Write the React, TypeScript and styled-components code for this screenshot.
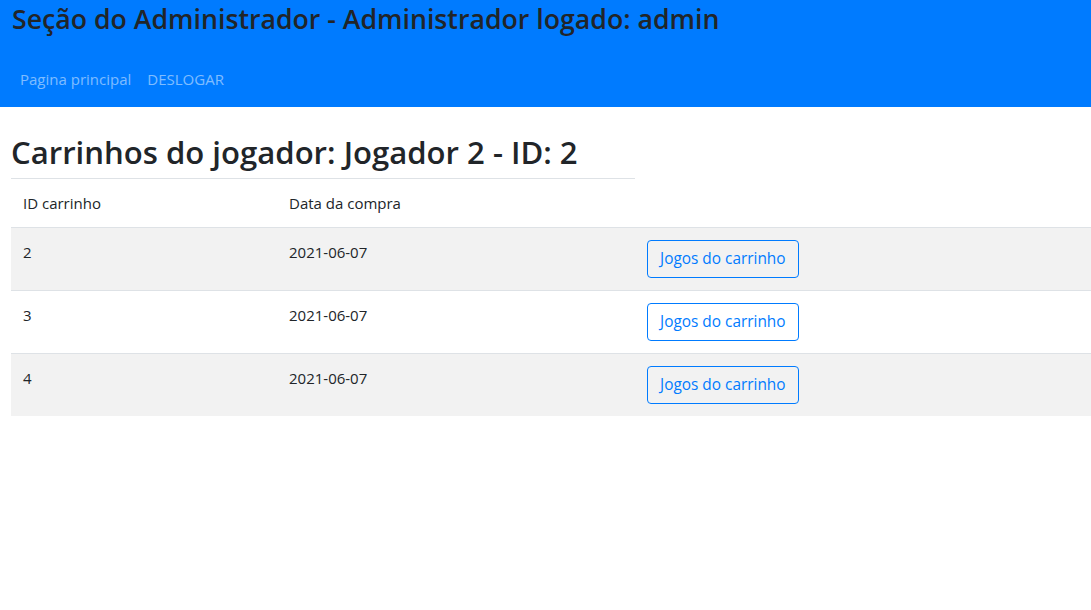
import React from "react";
import styled, { createGlobalStyle } from "styled-components";

const Global = createGlobalStyle`
  html, body { margin: 0; padding: 0; background: #fff; }
  body {
    font-family: "Open Sans", "Noto Sans", "Liberation Sans", sans-serif;
    color: #212529;
    font-size: 15px;
  }
  * { box-sizing: border-box; }
`;

const Header = styled.header`
  background: #007bff;
  height: 107px;
  padding: 2px 12px 0;
  display: flex;
  flex-direction: column;
`;

const SiteTitle = styled.h1`
  margin: 0;
  font-size: 26.7px;
  font-weight: 600;
  line-height: 34px;
  color: #212529;
`;

const Nav = styled.nav`
  display: flex;
  margin-top: 23px;
`;

const NavLink = styled.a`
  color: rgba(255, 255, 255, 0.5);
  padding: 8px;
  font-size: 15px;
  line-height: 24px;
  text-decoration: none;
  cursor: pointer;
`;

const Main = styled.main`
  padding: 26px 0 0 11px;
`;

const PageTitle = styled.h2`
  margin: 0;
  width: 624px;
  font-size: 31.1px;
  font-weight: 600;
  line-height: 38px;
  padding-bottom: 7px;
  border-bottom: 1px solid #dee2e6;
`;

const Table = styled.table`
  border-collapse: collapse;
  width: calc(100% + 40px);
`;

const HeadCell = styled.th<{ $w?: number }>`
  text-align: left;
  font-weight: 400;
  padding: 12px;
  line-height: 24px;
  font-size: 15px;
  vertical-align: top;
  width: ${(p) => (p.$w ? `${p.$w}px` : "auto")};
  border-bottom: 1px solid #dee2e6;
`;

const Row = styled.tr<{ $striped: boolean }>`
  background: ${(p) => (p.$striped ? "#f2f2f2" : "#fff")};
  border-bottom: 1px solid #dee2e6;
  &:last-child { border-bottom: none; }
`;

const Cell = styled.td`
  padding: 12px;
  line-height: 24px;
  font-size: 15px;
  vertical-align: top;
`;

const OutlineButton = styled.button`
  font-family: inherit;
  font-size: 15.4px;
  line-height: 24px;
  height: 38px;
  padding: 6px 12px;
  color: #007bff;
  background: transparent;
  border: 1px solid #007bff;
  border-radius: 4px;
  cursor: pointer;
`;

const carts = [
  { id: 2, date: "2021-06-07" },
  { id: 3, date: "2021-06-07" },
  { id: 4, date: "2021-06-07" },
];

export default function App() {
  return (
    <>
      <Global />
      <Header>
        <SiteTitle>Seção do Administrador - Administrador logado: admin</SiteTitle>
        <Nav>
          <NavLink>Pagina principal</NavLink>
          <NavLink>DESLOGAR</NavLink>
        </Nav>
      </Header>
      <Main>
        <PageTitle>Carrinhos do jogador: Jogador 2 - ID: 2</PageTitle>
        <Table>
          <thead>
            <tr>
              <HeadCell $w={266}>ID carrinho</HeadCell>
              <HeadCell $w={358}>Data da compra</HeadCell>
              <HeadCell />
            </tr>
          </thead>
          <tbody>
            {carts.map((c, i) => (
              <Row key={c.id} $striped={i % 2 === 0}>
                <Cell>{c.id}</Cell>
                <Cell>{c.date}</Cell>
                <Cell>
                  <OutlineButton>Jogos do carrinho</OutlineButton>
                </Cell>
              </Row>
            ))}
          </tbody>
        </Table>
      </Main>
    </>
  );
}
